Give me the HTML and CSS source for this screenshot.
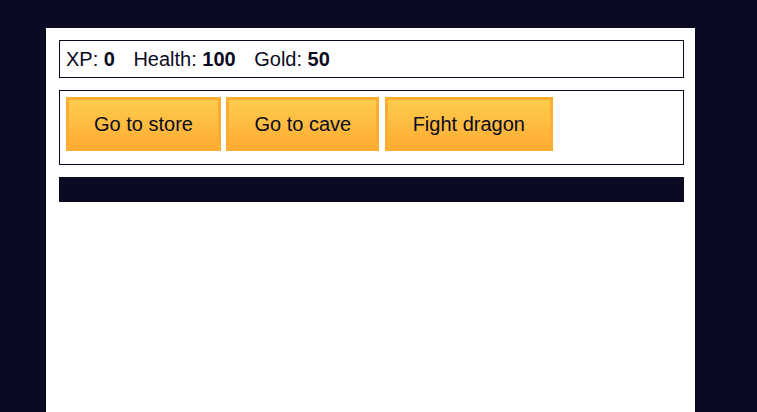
FILE: index.html
```html
<!DOCTYPE html>
<html lang="en">
<head>
<meta charset="utf-8">
<title>RPG - Dragon Repeller</title>
<link rel="stylesheet" href="styles.css">
</head>
<body>
<div class="game">
  <div class="stats">
    <span class="stat">XP: <strong>0</strong></span>
    <span class="stat">Health: <strong>100</strong></span>
    <span class="stat">Gold: <strong>50</strong></span>
  </div>
  <div class="controls">
    <button class="btn">Go to store</button>
    <button class="btn">Go to cave</button>
    <button class="btn">Fight dragon</button>
  </div>
  <div class="text"></div>
</div>
</body>
</html>
```
FILE: styles.css
```css
html, body {
  margin: 0;
  padding: 0;
}
body {
  background-color: #0a0a23;
  font-family: "Liberation Sans", Arial, sans-serif;
  font-size: 20px;
  height: 412px;
  overflow: hidden;
}
.game {
  width: 625px;
  height: 372px;
  margin: 28px 0 0 46px;
  padding: 12px 11px 0 13px;
  background-color: #ffffff;
  display: flex;
  flex-direction: column;
  gap: 12px;
}
.stats {
  border: 1px solid #0a0a23;
  padding: 6px 6px;
  height: 24px;
  line-height: 24px;
  color: #0a0a23;
  display: flex;
}
.stat {
  padding-right: 18.5px;
}
.controls {
  border: 1px solid #0a0a23;
  padding: 6px 6px 13px;
  display: flex;
  gap: 5.5px;
  align-items: flex-start;
}
.btn {
  font-family: "Liberation Sans", Arial, sans-serif;
  font-size: 20px;
  line-height: 24px;
  padding: 12px 25px;
  color: #0a0a23;
  background-color: #feac32;
  background-image: linear-gradient(#fecc4c, #ffac33);
  border: 3px solid #feac32;
  cursor: pointer;
}
.text {
  background-color: #0a0a23;
  color: #ffffff;
  height: 25px;
}
```
